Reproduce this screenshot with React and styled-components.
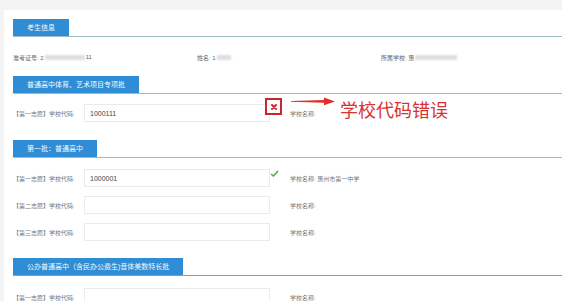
import React from 'react';
import styled, { createGlobalStyle } from 'styled-components';

const GlobalStyle = createGlobalStyle`
  html, body {
    margin: 0;
    padding: 0;
    background: #f3f3f3;
    font-family: "Liberation Sans", "Noto Sans CJK SC", sans-serif;
  }
`;

const Page = styled.div`
  width: 562px;
  height: 301px;
  overflow: hidden;
  padding: 10px 0 0 4px;
  box-sizing: border-box;
`;

const Panel = styled.div`
  background: #fff;
  height: 100%;
  padding: 9px 0 0 9px;
  box-sizing: border-box;
`;

const Header = styled.div`
  display: flex;
  border-bottom: 1px solid ${(p) => (p.$dark ? '#7fa2aa' : '#9dbcc5')};
  margin-top: ${(p) => p.$top || 0}px;
`;

const Tab = styled.div`
  height: 17px;
  line-height: 17px;
  padding: 0 14px;
  background: #2e8dd4;
  color: #f4f9fd;
  font-size: 7px;
  white-space: nowrap;
`;

const InfoRow = styled.div`
  display: flex;
  align-items: center;
  height: 14px;
  margin: 13px 0 12px;
  font-size: 6px;
  color: #666;
`;

const InfoItem = styled.div`
  display: flex;
  align-items: center;
  width: ${(p) => p.$w}px;
  white-space: nowrap;
`;

const Blur = styled.span`
  display: inline-block;
  width: ${(p) => p.$w}px;
  height: 5px;
  margin: 0 1px;
  background: #dedede;
  filter: blur(1.2px);
`;

const Rows = styled.div`
  display: flex;
  flex-direction: column;
  gap: 9px;
  margin-top: ${(p) => p.$top}px;
`;

const Row = styled.div`
  position: relative;
  display: flex;
  align-items: center;
  height: 18px;
`;

const Label = styled.div`
  width: 71px;
  font-size: 6px;
  color: #777;
  white-space: nowrap;
`;

const Input = styled.div`
  width: 186px;
  height: 18px;
  box-sizing: border-box;
  border: 1px solid #ebebeb;
  padding-left: 5px;
  display: flex;
  align-items: center;
  font-size: 7px;
  color: #444;
`;

const Status = styled.div`
  position: relative;
  width: 20px;
  height: 18px;
`;

const ErrorBox = styled.div`
  position: absolute;
  left: -5px;
  top: -6px;
  width: 17px;
  height: 17px;
  box-sizing: border-box;
  border: 2px solid #c9252d;
  background: #fff;
  display: flex;
  align-items: center;
  justify-content: center;
`;

const Check = styled.svg`
  position: absolute;
  left: 0;
  top: 1px;
`;

const SchoolName = styled.div`
  font-size: 6px;
  color: #777;
  white-space: nowrap;
`;

const Note = styled.div`
  position: absolute;
  left: 278px;
  top: -9px;
  display: flex;
  align-items: center;
  gap: 5px;
  pointer-events: none;
`;

const NoteText = styled.span`
  font-family: "Noto Sans CJK SC", sans-serif;
  font-size: 18px;
  color: #d7322f;
  margin-top: 1px;
`;

const Arrow = () => (
  <svg width="44" height="9" viewBox="0 0 44 9" style={{ marginTop: '-15px' }}>
    <polygon points="0,4 33,3 33,0.5 44,4.4 33,8.3 33,5.8 0,4.8" fill="#e0302c" />
  </svg>
);

const Cross = () => (
  <svg width="6" height="6" viewBox="0 0 6 6">
    <path d="M1 1 L5 5 M5 1 L1 5" stroke="#d0262e" strokeWidth="2" strokeLinecap="round" />
  </svg>
);

const CodeRow = ({ label, value, status, name, children }) => (
  <Row>
    <Label>{label}</Label>
    <Input>{value}</Input>
    <Status>
      {status === 'error' && (
        <ErrorBox>
          <Cross />
        </ErrorBox>
      )}
      {status === 'ok' && (
        <Check width="9" height="7" viewBox="0 0 9 7">
          <path d="M1 4 L3.4 6 L8 1" fill="none" stroke="#4caf50" strokeWidth="1.6" />
        </Check>
      )}
    </Status>
    <SchoolName>学校名称:{name ? ` ${name}` : ''}</SchoolName>
    {children}
  </Row>
);

export default function App() {
  return (
    <>
      <GlobalStyle />
      <Page>
        <Panel>
          <Header>
            <Tab>考生信息</Tab>
          </Header>
          <InfoRow>
            <InfoItem $w={184}>
              准考证号: 2<Blur $w={40} />11
            </InfoItem>
            <InfoItem $w={184}>
              姓名: 1<Blur $w={14} />
            </InfoItem>
            <InfoItem $w={150}>
              所属学校: 惠<Blur $w={42} />
            </InfoItem>
          </InfoRow>

          <Header>
            <Tab>普通高中体育、艺术项目专项批</Tab>
          </Header>
          <Rows $top={10}>
            <CodeRow label="【第一志愿】学校代码:" value="1000111" status="error">
              <Note>
                <Arrow />
                <NoteText>学校代码错误</NoteText>
              </Note>
            </CodeRow>
          </Rows>

          <Header $top={18}>
            <Tab>第一批：普通高中</Tab>
          </Header>
          <Rows $top={11}>
            <CodeRow label="【第一志愿】学校代码:" value="1000001" status="ok" name="惠州市第一中学" />
            <CodeRow label="【第二志愿】学校代码:" />
            <CodeRow label="【第三志愿】学校代码:" />
          </Rows>

          <Header $top={17} $dark>
            <Tab>公办普通高中（含民办公费生)音体美数特长批</Tab>
          </Header>
          <Rows $top={12}>
            <CodeRow label="【第一志愿】学校代码:" />
          </Rows>
        </Panel>
      </Page>
    </>
  );
}
